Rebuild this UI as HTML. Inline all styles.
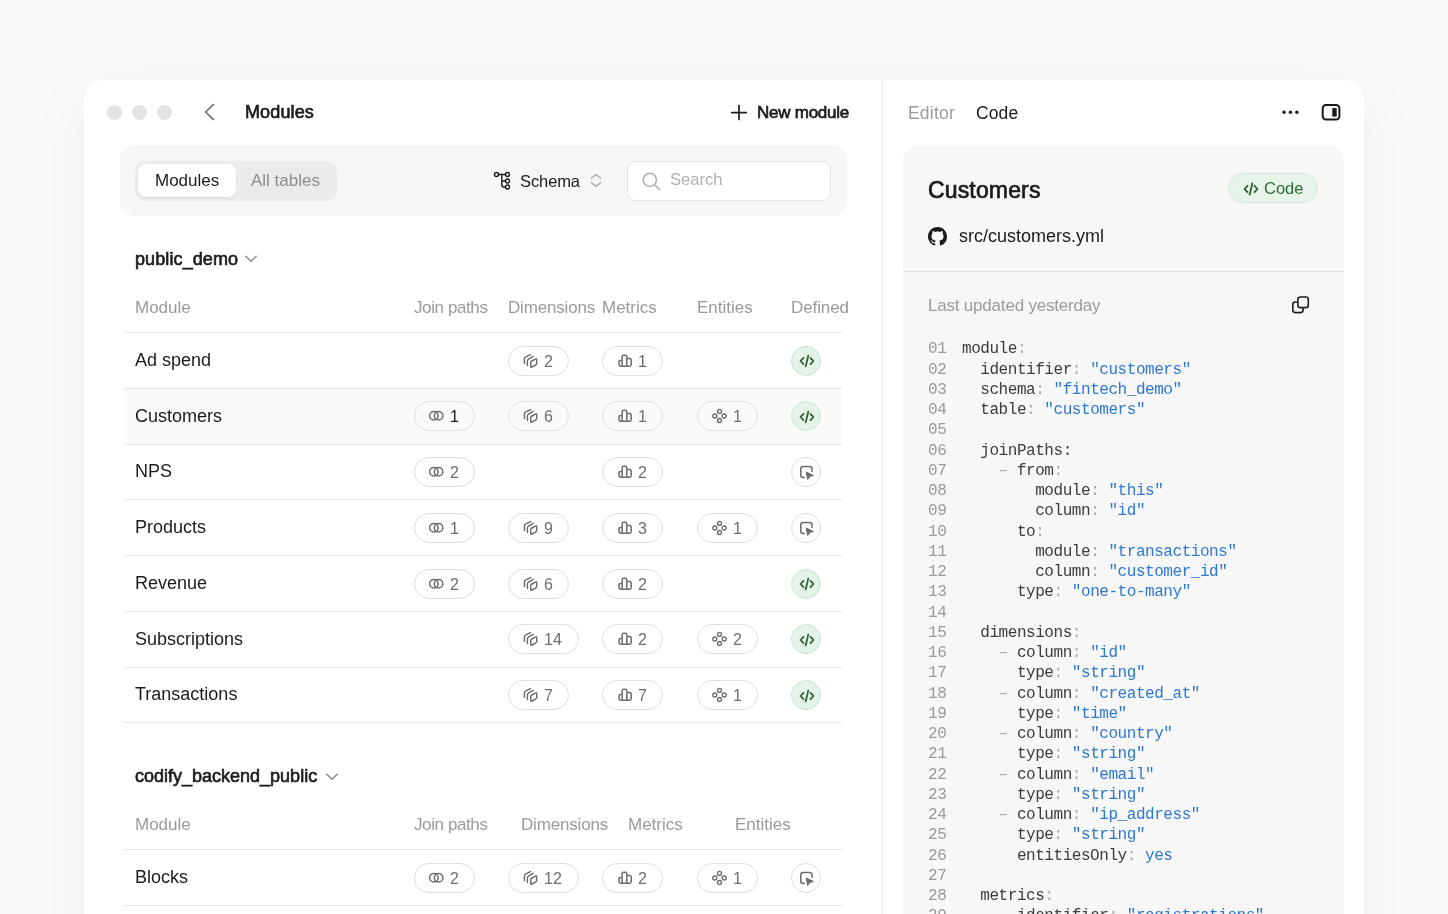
<!DOCTYPE html>
<html><head><meta charset="utf-8">
<style>
*{margin:0;padding:0;box-sizing:border-box}
html,body{width:1448px;height:914px;overflow:hidden}
body{background:#fafafa;font-family:"Liberation Sans",sans-serif;color:#1b1b1b;position:relative}
.a{position:absolute;overflow:visible}
.win{position:absolute;left:84px;top:80px;width:1280px;height:900px;background:#fff;border-radius:20px;box-shadow:0 8px 70px rgba(0,0,0,0.045),0 0 2px rgba(0,0,0,0.025)}
.vdiv{position:absolute;left:882px;top:80px;width:1px;height:834px;background:#ebebeb}
.tl{position:absolute;width:15px;height:15px;border-radius:50%;background:#e3e3e3}
.t{position:absolute;white-space:nowrap;line-height:1;will-change:transform}
.toolbar{position:absolute;left:120px;top:145px;width:727px;height:71px;background:#f6f6f6;border-radius:14px}
.seg{position:absolute;left:135px;top:161px;width:202px;height:40px;background:#ebebeb;border-radius:10px}
.segon{position:absolute;left:138px;top:164px;width:98px;height:33px;background:#fff;border-radius:8px;box-shadow:0 1px 2px rgba(0,0,0,0.08)}
.search{position:absolute;left:627px;top:160.5px;width:204px;height:40px;background:#fff;border:1px solid #e4e4e4;border-radius:8px}
.hline{position:absolute;left:124px;width:718px;height:1px;background:#e6e6e6}
.rowbg{position:absolute;left:124px;width:718px;background:#fafafa}
.pill{position:absolute;height:30px;border:1px solid #dedede;border-radius:15px}
.dcirc{position:absolute;width:30px;height:30px;border-radius:50%;border:1px solid #dedede}
.dcirc.g{background:#e4f2e7;border-color:#cce4d1}
.card{position:absolute;left:902.5px;top:145px;width:441.5px;height:800px;background:#f7f7f7;border-radius:16px}
.badge{position:absolute;left:1228px;top:173px;width:90px;height:30px;border-radius:15px;background:#e6f4e9;border:1px solid #d3e8d8}
.cdiv{position:absolute;left:902.5px;top:271px;width:441.5px;height:1px;background:#e2e2e2}
.code{font-family:"Liberation Mono",monospace}
</style></head><body>
<div class="win"></div>
<div class="vdiv"></div>
<div class="tl" style="left:107.0px;top:105.0px"></div>
<div class="tl" style="left:132.1px;top:105.0px"></div>
<div class="tl" style="left:157.3px;top:105.0px"></div>
<svg class="a" style="left:200px;top:100px" width="20" height="24" viewBox="0 0 20 24"><polyline points="13.3,4.6 5.6,12 13.3,19.4" fill="none" stroke="#6f6f6f" stroke-width="1.6" stroke-linecap="round" stroke-linejoin="round"/></svg>
<div class="t" style="left:245.00px;top:103.26px;font-size:18px;color:#1b1b1b;font-weight:400;letter-spacing:0.13px;-webkit-text-stroke:0.65px #1b1b1b;">Modules</div>
<svg class="a" style="left:729px;top:103px" width="20" height="20" viewBox="0 0 20 20"><path d="M10 2.5V16.5M2.8 9.6H17.2" stroke="#1b1b1b" stroke-width="1.7" stroke-linecap="round"/></svg>
<div class="t" style="left:757.00px;top:104.11px;font-size:17px;color:#1b1b1b;font-weight:400;letter-spacing:-0.25px;-webkit-text-stroke:0.65px #1b1b1b;">New module</div>
<div class="toolbar"></div><div class="seg"></div><div class="segon"></div>
<div class="t" style="left:155.00px;top:172.11px;font-size:17px;color:#1b1b1b;font-weight:400;">Modules</div>
<div class="t" style="left:250.50px;top:172.11px;font-size:17px;color:#8d8d8d;font-weight:400;">All tables</div>
<svg class="a" style="left:492px;top:170px" width="22" height="22" viewBox="0 0 22 22" fill="none" stroke="#1b1b1b" stroke-width="1.4"><circle cx="4.5" cy="4.5" r="2"/><circle cx="15.5" cy="4.5" r="2"/><circle cx="15.5" cy="11" r="2"/><circle cx="15.5" cy="17" r="2"/><path d="M6.5 4.5H13.5M9.8 4.5V15Q9.8 17 11.8 17H13.5M9.8 11H13.5"/></svg>
<div class="t" style="left:520.00px;top:172.53px;font-size:16.5px;color:#1b1b1b;font-weight:400;letter-spacing:-0.1px;">Schema</div>
<svg class="a" style="left:588px;top:172px" width="16" height="18" viewBox="0 0 16 18" fill="none" stroke="#b0b0b0" stroke-width="1.4" stroke-linecap="round" stroke-linejoin="round"><polyline points="3.2,6.3 7.9,2.6 12.6,6.3"/><polyline points="3.2,10.6 7.9,14.4 12.6,10.6"/></svg>
<div class="search"></div>
<svg class="a" style="left:640px;top:171px" width="22" height="22" viewBox="0 0 22 22" fill="none" stroke="#b0b0b0" stroke-width="1.5" stroke-linecap="round"><circle cx="9.8" cy="8.8" r="6.6"/><path d="M14.6 13.7L19.6 18.6"/></svg>
<div class="t" style="left:670.00px;top:172.45px;font-size:16.6px;color:#b0b0b0;font-weight:400;">Search</div>
<div class="t" style="left:134.50px;top:249.66px;font-size:18px;color:#1b1b1b;font-weight:400;letter-spacing:0.1px;-webkit-text-stroke:0.65px #1b1b1b;">public_demo</div>
<svg class="a" style="left:243px;top:252px" width="16" height="14" viewBox="0 0 16 14" fill="none" stroke="#8a8a8a" stroke-width="1.4" stroke-linecap="round" stroke-linejoin="round"><polyline points="2.8,4.2 8,9.3 13.2,4.2"/></svg>
<div class="t" style="left:135.00px;top:299.11px;font-size:17px;color:#9a9a9a;font-weight:400;letter-spacing:0px;">Module</div>
<div class="t" style="left:413.50px;top:299.11px;font-size:17px;color:#9a9a9a;font-weight:400;letter-spacing:-0.4px;">Join paths</div>
<div class="t" style="left:508.00px;top:299.11px;font-size:17px;color:#9a9a9a;font-weight:400;letter-spacing:-0.17px;">Dimensions</div>
<div class="t" style="left:602.00px;top:299.11px;font-size:17px;color:#9a9a9a;font-weight:400;letter-spacing:0px;">Metrics</div>
<div class="t" style="left:697.00px;top:299.11px;font-size:17px;color:#9a9a9a;font-weight:400;letter-spacing:0px;">Entities</div>
<div class="t" style="left:791.00px;top:299.11px;font-size:17px;color:#9a9a9a;font-weight:400;letter-spacing:-0.1px;">Defined</div>
<div class="hline" style="top:332px"></div>
<div class="hline" style="top:387.75px"></div>
<div class="t" style="left:135.00px;top:350.79px;font-size:18px;color:#1b1b1b;font-weight:400;">Ad spend</div>
<div class="pill" style="left:508px;top:345.62px;width:61px"></div><svg class="a" style="left:508px;top:345.62px" width="61" height="30" viewBox="0 0 61 30"><g fill="none" stroke="#6c6c6c" stroke-width="1.45" stroke-linejoin="round" stroke-linecap="round"><path d="M22.7 16.9Q22.7 15.6 23.9 15L27.5 13.1Q28.7 12.5 28.7 13.8V17.3Q28.7 18.6 27.5 19.2L23.9 21Q22.7 21.6 22.7 20.3Z"/><path d="M19.4 19.5V15Q19.4 13.8 20.5 13.2L25.1 10.3"/><path d="M16.4 17.6V13Q16.4 11.8 17.5 11.2L22.4 8.6"/></g></svg><div class="t" style="left:543.80px;top:353.68px;font-size:16px;color:#6e6e6e;font-weight:400;">2</div>
<div class="pill" style="left:602px;top:345.62px;width:61px"></div><svg class="a" style="left:602px;top:345.62px" width="61" height="30" viewBox="0 0 61 30"><path fill="none" stroke="#6c6c6c" stroke-width="1.5" stroke-linejoin="round" d="M17 18.6V16.1Q17 14.6 18.5 14.6H20.1V10.8Q20.1 9.3 21.6 9.3H23.3Q24.8 9.3 24.8 10.8V12.6H27.7Q29.2 12.6 29.2 14.1V18.6Q29.2 20.3 27.5 20.3H18.7Q17 20.3 17 18.6ZM20.1 14.6V20.3M24.8 12.6V20.3"/></svg><div class="t" style="left:637.80px;top:353.68px;font-size:16px;color:#6e6e6e;font-weight:400;">1</div>
<div class="dcirc g" style="left:791px;top:345.62px"></div><svg class="a" style="left:799px;top:354.12px" width="16" height="14" viewBox="0 0 16 14" fill="none" stroke="#2c6233" stroke-width="1.7" stroke-linecap="round" stroke-linejoin="round"><polyline points="4.5,3.8 1.5,7 4.5,10.2"/><polyline points="11.5,3.8 14.5,7 11.5,10.2"/><path d="M9.3 1.5L6.7 12.5"/></svg>
<div class="rowbg" style="top:388.75px;height:54.75px"></div><div class="hline" style="top:443.50px"></div>
<div class="t" style="left:135.00px;top:406.54px;font-size:18px;color:#1b1b1b;font-weight:400;">Customers</div>
<div class="pill" style="left:414px;top:401.38px;width:61px"></div><svg class="a" style="left:414px;top:401.38px" width="61" height="30" viewBox="0 0 61 30"><g fill="none" stroke="#6c6c6c" stroke-width="1.5"><circle cx="19.9" cy="14.75" r="4.3"/><circle cx="24.6" cy="14.75" r="4.3"/></g></svg><div class="t" style="left:449.80px;top:409.43px;font-size:16px;color:#1b1b1b;font-weight:400;">1</div>
<div class="pill" style="left:508px;top:401.38px;width:61px"></div><svg class="a" style="left:508px;top:401.38px" width="61" height="30" viewBox="0 0 61 30"><g fill="none" stroke="#6c6c6c" stroke-width="1.45" stroke-linejoin="round" stroke-linecap="round"><path d="M22.7 16.9Q22.7 15.6 23.9 15L27.5 13.1Q28.7 12.5 28.7 13.8V17.3Q28.7 18.6 27.5 19.2L23.9 21Q22.7 21.6 22.7 20.3Z"/><path d="M19.4 19.5V15Q19.4 13.8 20.5 13.2L25.1 10.3"/><path d="M16.4 17.6V13Q16.4 11.8 17.5 11.2L22.4 8.6"/></g></svg><div class="t" style="left:543.80px;top:409.43px;font-size:16px;color:#6e6e6e;font-weight:400;">6</div>
<div class="pill" style="left:602px;top:401.38px;width:61px"></div><svg class="a" style="left:602px;top:401.38px" width="61" height="30" viewBox="0 0 61 30"><path fill="none" stroke="#6c6c6c" stroke-width="1.5" stroke-linejoin="round" d="M17 18.6V16.1Q17 14.6 18.5 14.6H20.1V10.8Q20.1 9.3 21.6 9.3H23.3Q24.8 9.3 24.8 10.8V12.6H27.7Q29.2 12.6 29.2 14.1V18.6Q29.2 20.3 27.5 20.3H18.7Q17 20.3 17 18.6ZM20.1 14.6V20.3M24.8 12.6V20.3"/></svg><div class="t" style="left:637.80px;top:409.43px;font-size:16px;color:#6e6e6e;font-weight:400;">1</div>
<div class="pill" style="left:697px;top:401.38px;width:61px"></div><svg class="a" style="left:697px;top:401.38px" width="61" height="30" viewBox="0 0 61 30"><g fill="none" stroke="#6c6c6c" stroke-width="1.35"><circle cx="22.5" cy="10.4" r="2.0"/><circle cx="17.8" cy="14.95" r="2.0"/><circle cx="27.2" cy="14.95" r="2.0"/><circle cx="22.5" cy="19.5" r="2.0"/></g></svg><div class="t" style="left:732.80px;top:409.43px;font-size:16px;color:#6e6e6e;font-weight:400;">1</div>
<div class="dcirc g" style="left:791px;top:401.38px"></div><svg class="a" style="left:799px;top:409.88px" width="16" height="14" viewBox="0 0 16 14" fill="none" stroke="#2c6233" stroke-width="1.7" stroke-linecap="round" stroke-linejoin="round"><polyline points="4.5,3.8 1.5,7 4.5,10.2"/><polyline points="11.5,3.8 14.5,7 11.5,10.2"/><path d="M9.3 1.5L6.7 12.5"/></svg>
<div class="hline" style="top:499.25px"></div>
<div class="t" style="left:135.00px;top:462.29px;font-size:18px;color:#1b1b1b;font-weight:400;">NPS</div>
<div class="pill" style="left:414px;top:457.12px;width:61px"></div><svg class="a" style="left:414px;top:457.12px" width="61" height="30" viewBox="0 0 61 30"><g fill="none" stroke="#6c6c6c" stroke-width="1.5"><circle cx="19.9" cy="14.75" r="4.3"/><circle cx="24.6" cy="14.75" r="4.3"/></g></svg><div class="t" style="left:449.80px;top:465.18px;font-size:16px;color:#6e6e6e;font-weight:400;">2</div>
<div class="pill" style="left:602px;top:457.12px;width:61px"></div><svg class="a" style="left:602px;top:457.12px" width="61" height="30" viewBox="0 0 61 30"><path fill="none" stroke="#6c6c6c" stroke-width="1.5" stroke-linejoin="round" d="M17 18.6V16.1Q17 14.6 18.5 14.6H20.1V10.8Q20.1 9.3 21.6 9.3H23.3Q24.8 9.3 24.8 10.8V12.6H27.7Q29.2 12.6 29.2 14.1V18.6Q29.2 20.3 27.5 20.3H18.7Q17 20.3 17 18.6ZM20.1 14.6V20.3M24.8 12.6V20.3"/></svg><div class="t" style="left:637.80px;top:465.18px;font-size:16px;color:#6e6e6e;font-weight:400;">2</div>
<div class="dcirc" style="left:791px;top:457.12px"></div><svg class="a" style="left:791px;top:457.12px" width="30" height="30" viewBox="0 0 30 30" fill="none"><path d="M21.05 14.6V12Q21.05 9.5 18.55 9.5H12.25Q9.75 9.5 9.75 12V18.1Q9.75 20.6 12.25 20.6H13.4" stroke="#6c6c6c" stroke-width="1.5" stroke-linecap="round"/><path d="M15.2 14.9L22.4 18.5L18.8 19.5L16.7 22.5Z" fill="#6c6c6c" stroke="#6c6c6c" stroke-width="1" stroke-linejoin="round"/></svg>
<div class="hline" style="top:555.00px"></div>
<div class="t" style="left:135.00px;top:518.04px;font-size:18px;color:#1b1b1b;font-weight:400;">Products</div>
<div class="pill" style="left:414px;top:512.88px;width:61px"></div><svg class="a" style="left:414px;top:512.88px" width="61" height="30" viewBox="0 0 61 30"><g fill="none" stroke="#6c6c6c" stroke-width="1.5"><circle cx="19.9" cy="14.75" r="4.3"/><circle cx="24.6" cy="14.75" r="4.3"/></g></svg><div class="t" style="left:449.80px;top:520.93px;font-size:16px;color:#6e6e6e;font-weight:400;">1</div>
<div class="pill" style="left:508px;top:512.88px;width:61px"></div><svg class="a" style="left:508px;top:512.88px" width="61" height="30" viewBox="0 0 61 30"><g fill="none" stroke="#6c6c6c" stroke-width="1.45" stroke-linejoin="round" stroke-linecap="round"><path d="M22.7 16.9Q22.7 15.6 23.9 15L27.5 13.1Q28.7 12.5 28.7 13.8V17.3Q28.7 18.6 27.5 19.2L23.9 21Q22.7 21.6 22.7 20.3Z"/><path d="M19.4 19.5V15Q19.4 13.8 20.5 13.2L25.1 10.3"/><path d="M16.4 17.6V13Q16.4 11.8 17.5 11.2L22.4 8.6"/></g></svg><div class="t" style="left:543.80px;top:520.93px;font-size:16px;color:#6e6e6e;font-weight:400;">9</div>
<div class="pill" style="left:602px;top:512.88px;width:61px"></div><svg class="a" style="left:602px;top:512.88px" width="61" height="30" viewBox="0 0 61 30"><path fill="none" stroke="#6c6c6c" stroke-width="1.5" stroke-linejoin="round" d="M17 18.6V16.1Q17 14.6 18.5 14.6H20.1V10.8Q20.1 9.3 21.6 9.3H23.3Q24.8 9.3 24.8 10.8V12.6H27.7Q29.2 12.6 29.2 14.1V18.6Q29.2 20.3 27.5 20.3H18.7Q17 20.3 17 18.6ZM20.1 14.6V20.3M24.8 12.6V20.3"/></svg><div class="t" style="left:637.80px;top:520.93px;font-size:16px;color:#6e6e6e;font-weight:400;">3</div>
<div class="pill" style="left:697px;top:512.88px;width:61px"></div><svg class="a" style="left:697px;top:512.88px" width="61" height="30" viewBox="0 0 61 30"><g fill="none" stroke="#6c6c6c" stroke-width="1.35"><circle cx="22.5" cy="10.4" r="2.0"/><circle cx="17.8" cy="14.95" r="2.0"/><circle cx="27.2" cy="14.95" r="2.0"/><circle cx="22.5" cy="19.5" r="2.0"/></g></svg><div class="t" style="left:732.80px;top:520.93px;font-size:16px;color:#6e6e6e;font-weight:400;">1</div>
<div class="dcirc" style="left:791px;top:512.88px"></div><svg class="a" style="left:791px;top:512.88px" width="30" height="30" viewBox="0 0 30 30" fill="none"><path d="M21.05 14.6V12Q21.05 9.5 18.55 9.5H12.25Q9.75 9.5 9.75 12V18.1Q9.75 20.6 12.25 20.6H13.4" stroke="#6c6c6c" stroke-width="1.5" stroke-linecap="round"/><path d="M15.2 14.9L22.4 18.5L18.8 19.5L16.7 22.5Z" fill="#6c6c6c" stroke="#6c6c6c" stroke-width="1" stroke-linejoin="round"/></svg>
<div class="hline" style="top:610.75px"></div>
<div class="t" style="left:135.00px;top:573.79px;font-size:18px;color:#1b1b1b;font-weight:400;">Revenue</div>
<div class="pill" style="left:414px;top:568.62px;width:61px"></div><svg class="a" style="left:414px;top:568.62px" width="61" height="30" viewBox="0 0 61 30"><g fill="none" stroke="#6c6c6c" stroke-width="1.5"><circle cx="19.9" cy="14.75" r="4.3"/><circle cx="24.6" cy="14.75" r="4.3"/></g></svg><div class="t" style="left:449.80px;top:576.68px;font-size:16px;color:#6e6e6e;font-weight:400;">2</div>
<div class="pill" style="left:508px;top:568.62px;width:61px"></div><svg class="a" style="left:508px;top:568.62px" width="61" height="30" viewBox="0 0 61 30"><g fill="none" stroke="#6c6c6c" stroke-width="1.45" stroke-linejoin="round" stroke-linecap="round"><path d="M22.7 16.9Q22.7 15.6 23.9 15L27.5 13.1Q28.7 12.5 28.7 13.8V17.3Q28.7 18.6 27.5 19.2L23.9 21Q22.7 21.6 22.7 20.3Z"/><path d="M19.4 19.5V15Q19.4 13.8 20.5 13.2L25.1 10.3"/><path d="M16.4 17.6V13Q16.4 11.8 17.5 11.2L22.4 8.6"/></g></svg><div class="t" style="left:543.80px;top:576.68px;font-size:16px;color:#6e6e6e;font-weight:400;">6</div>
<div class="pill" style="left:602px;top:568.62px;width:61px"></div><svg class="a" style="left:602px;top:568.62px" width="61" height="30" viewBox="0 0 61 30"><path fill="none" stroke="#6c6c6c" stroke-width="1.5" stroke-linejoin="round" d="M17 18.6V16.1Q17 14.6 18.5 14.6H20.1V10.8Q20.1 9.3 21.6 9.3H23.3Q24.8 9.3 24.8 10.8V12.6H27.7Q29.2 12.6 29.2 14.1V18.6Q29.2 20.3 27.5 20.3H18.7Q17 20.3 17 18.6ZM20.1 14.6V20.3M24.8 12.6V20.3"/></svg><div class="t" style="left:637.80px;top:576.68px;font-size:16px;color:#6e6e6e;font-weight:400;">2</div>
<div class="dcirc g" style="left:791px;top:568.62px"></div><svg class="a" style="left:799px;top:577.12px" width="16" height="14" viewBox="0 0 16 14" fill="none" stroke="#2c6233" stroke-width="1.7" stroke-linecap="round" stroke-linejoin="round"><polyline points="4.5,3.8 1.5,7 4.5,10.2"/><polyline points="11.5,3.8 14.5,7 11.5,10.2"/><path d="M9.3 1.5L6.7 12.5"/></svg>
<div class="hline" style="top:666.50px"></div>
<div class="t" style="left:135.00px;top:629.54px;font-size:18px;color:#1b1b1b;font-weight:400;">Subscriptions</div>
<div class="pill" style="left:508px;top:624.38px;width:71px"></div><svg class="a" style="left:508px;top:624.38px" width="71" height="30" viewBox="0 0 71 30"><g fill="none" stroke="#6c6c6c" stroke-width="1.45" stroke-linejoin="round" stroke-linecap="round"><path d="M22.7 16.9Q22.7 15.6 23.9 15L27.5 13.1Q28.7 12.5 28.7 13.8V17.3Q28.7 18.6 27.5 19.2L23.9 21Q22.7 21.6 22.7 20.3Z"/><path d="M19.4 19.5V15Q19.4 13.8 20.5 13.2L25.1 10.3"/><path d="M16.4 17.6V13Q16.4 11.8 17.5 11.2L22.4 8.6"/></g></svg><div class="t" style="left:543.80px;top:632.43px;font-size:16px;color:#6e6e6e;font-weight:400;">14</div>
<div class="pill" style="left:602px;top:624.38px;width:61px"></div><svg class="a" style="left:602px;top:624.38px" width="61" height="30" viewBox="0 0 61 30"><path fill="none" stroke="#6c6c6c" stroke-width="1.5" stroke-linejoin="round" d="M17 18.6V16.1Q17 14.6 18.5 14.6H20.1V10.8Q20.1 9.3 21.6 9.3H23.3Q24.8 9.3 24.8 10.8V12.6H27.7Q29.2 12.6 29.2 14.1V18.6Q29.2 20.3 27.5 20.3H18.7Q17 20.3 17 18.6ZM20.1 14.6V20.3M24.8 12.6V20.3"/></svg><div class="t" style="left:637.80px;top:632.43px;font-size:16px;color:#6e6e6e;font-weight:400;">2</div>
<div class="pill" style="left:697px;top:624.38px;width:61px"></div><svg class="a" style="left:697px;top:624.38px" width="61" height="30" viewBox="0 0 61 30"><g fill="none" stroke="#6c6c6c" stroke-width="1.35"><circle cx="22.5" cy="10.4" r="2.0"/><circle cx="17.8" cy="14.95" r="2.0"/><circle cx="27.2" cy="14.95" r="2.0"/><circle cx="22.5" cy="19.5" r="2.0"/></g></svg><div class="t" style="left:732.80px;top:632.43px;font-size:16px;color:#6e6e6e;font-weight:400;">2</div>
<div class="dcirc g" style="left:791px;top:624.38px"></div><svg class="a" style="left:799px;top:632.88px" width="16" height="14" viewBox="0 0 16 14" fill="none" stroke="#2c6233" stroke-width="1.7" stroke-linecap="round" stroke-linejoin="round"><polyline points="4.5,3.8 1.5,7 4.5,10.2"/><polyline points="11.5,3.8 14.5,7 11.5,10.2"/><path d="M9.3 1.5L6.7 12.5"/></svg>
<div class="hline" style="top:722.25px"></div>
<div class="t" style="left:135.00px;top:685.29px;font-size:18px;color:#1b1b1b;font-weight:400;">Transactions</div>
<div class="pill" style="left:508px;top:680.12px;width:61px"></div><svg class="a" style="left:508px;top:680.12px" width="61" height="30" viewBox="0 0 61 30"><g fill="none" stroke="#6c6c6c" stroke-width="1.45" stroke-linejoin="round" stroke-linecap="round"><path d="M22.7 16.9Q22.7 15.6 23.9 15L27.5 13.1Q28.7 12.5 28.7 13.8V17.3Q28.7 18.6 27.5 19.2L23.9 21Q22.7 21.6 22.7 20.3Z"/><path d="M19.4 19.5V15Q19.4 13.8 20.5 13.2L25.1 10.3"/><path d="M16.4 17.6V13Q16.4 11.8 17.5 11.2L22.4 8.6"/></g></svg><div class="t" style="left:543.80px;top:688.18px;font-size:16px;color:#6e6e6e;font-weight:400;">7</div>
<div class="pill" style="left:602px;top:680.12px;width:61px"></div><svg class="a" style="left:602px;top:680.12px" width="61" height="30" viewBox="0 0 61 30"><path fill="none" stroke="#6c6c6c" stroke-width="1.5" stroke-linejoin="round" d="M17 18.6V16.1Q17 14.6 18.5 14.6H20.1V10.8Q20.1 9.3 21.6 9.3H23.3Q24.8 9.3 24.8 10.8V12.6H27.7Q29.2 12.6 29.2 14.1V18.6Q29.2 20.3 27.5 20.3H18.7Q17 20.3 17 18.6ZM20.1 14.6V20.3M24.8 12.6V20.3"/></svg><div class="t" style="left:637.80px;top:688.18px;font-size:16px;color:#6e6e6e;font-weight:400;">7</div>
<div class="pill" style="left:697px;top:680.12px;width:61px"></div><svg class="a" style="left:697px;top:680.12px" width="61" height="30" viewBox="0 0 61 30"><g fill="none" stroke="#6c6c6c" stroke-width="1.35"><circle cx="22.5" cy="10.4" r="2.0"/><circle cx="17.8" cy="14.95" r="2.0"/><circle cx="27.2" cy="14.95" r="2.0"/><circle cx="22.5" cy="19.5" r="2.0"/></g></svg><div class="t" style="left:732.80px;top:688.18px;font-size:16px;color:#6e6e6e;font-weight:400;">1</div>
<div class="dcirc g" style="left:791px;top:680.12px"></div><svg class="a" style="left:799px;top:688.62px" width="16" height="14" viewBox="0 0 16 14" fill="none" stroke="#2c6233" stroke-width="1.7" stroke-linecap="round" stroke-linejoin="round"><polyline points="4.5,3.8 1.5,7 4.5,10.2"/><polyline points="11.5,3.8 14.5,7 11.5,10.2"/><path d="M9.3 1.5L6.7 12.5"/></svg>
<div class="t" style="left:134.50px;top:766.76px;font-size:18px;color:#1b1b1b;font-weight:400;letter-spacing:0px;-webkit-text-stroke:0.65px #1b1b1b;">codify_backend_public</div>
<svg class="a" style="left:324px;top:770px" width="16" height="14" viewBox="0 0 16 14" fill="none" stroke="#8a8a8a" stroke-width="1.4" stroke-linecap="round" stroke-linejoin="round"><polyline points="2.8,4.2 8,9.3 13.2,4.2"/></svg>
<div class="t" style="left:135.00px;top:816.11px;font-size:17px;color:#9a9a9a;font-weight:400;letter-spacing:0px;">Module</div>
<div class="t" style="left:413.50px;top:816.11px;font-size:17px;color:#9a9a9a;font-weight:400;letter-spacing:-0.4px;">Join paths</div>
<div class="t" style="left:521.00px;top:816.11px;font-size:17px;color:#9a9a9a;font-weight:400;letter-spacing:-0.17px;">Dimensions</div>
<div class="t" style="left:628.00px;top:816.11px;font-size:17px;color:#9a9a9a;font-weight:400;letter-spacing:0px;">Metrics</div>
<div class="t" style="left:735.00px;top:816.11px;font-size:17px;color:#9a9a9a;font-weight:400;letter-spacing:0px;">Entities</div>
<div class="hline" style="top:849px"></div>
<div class="hline" style="top:905.00px"></div>
<div class="t" style="left:135.00px;top:867.91px;font-size:18px;color:#1b1b1b;font-weight:400;">Blocks</div>
<div class="pill" style="left:414px;top:862.75px;width:61px"></div><svg class="a" style="left:414px;top:862.75px" width="61" height="30" viewBox="0 0 61 30"><g fill="none" stroke="#6c6c6c" stroke-width="1.5"><circle cx="19.9" cy="14.75" r="4.3"/><circle cx="24.6" cy="14.75" r="4.3"/></g></svg><div class="t" style="left:449.80px;top:870.81px;font-size:16px;color:#6e6e6e;font-weight:400;">2</div>
<div class="pill" style="left:508px;top:862.75px;width:71px"></div><svg class="a" style="left:508px;top:862.75px" width="71" height="30" viewBox="0 0 71 30"><g fill="none" stroke="#6c6c6c" stroke-width="1.45" stroke-linejoin="round" stroke-linecap="round"><path d="M22.7 16.9Q22.7 15.6 23.9 15L27.5 13.1Q28.7 12.5 28.7 13.8V17.3Q28.7 18.6 27.5 19.2L23.9 21Q22.7 21.6 22.7 20.3Z"/><path d="M19.4 19.5V15Q19.4 13.8 20.5 13.2L25.1 10.3"/><path d="M16.4 17.6V13Q16.4 11.8 17.5 11.2L22.4 8.6"/></g></svg><div class="t" style="left:543.80px;top:870.81px;font-size:16px;color:#6e6e6e;font-weight:400;">12</div>
<div class="pill" style="left:602px;top:862.75px;width:61px"></div><svg class="a" style="left:602px;top:862.75px" width="61" height="30" viewBox="0 0 61 30"><path fill="none" stroke="#6c6c6c" stroke-width="1.5" stroke-linejoin="round" d="M17 18.6V16.1Q17 14.6 18.5 14.6H20.1V10.8Q20.1 9.3 21.6 9.3H23.3Q24.8 9.3 24.8 10.8V12.6H27.7Q29.2 12.6 29.2 14.1V18.6Q29.2 20.3 27.5 20.3H18.7Q17 20.3 17 18.6ZM20.1 14.6V20.3M24.8 12.6V20.3"/></svg><div class="t" style="left:637.80px;top:870.81px;font-size:16px;color:#6e6e6e;font-weight:400;">2</div>
<div class="pill" style="left:697px;top:862.75px;width:61px"></div><svg class="a" style="left:697px;top:862.75px" width="61" height="30" viewBox="0 0 61 30"><g fill="none" stroke="#6c6c6c" stroke-width="1.35"><circle cx="22.5" cy="10.4" r="2.0"/><circle cx="17.8" cy="14.95" r="2.0"/><circle cx="27.2" cy="14.95" r="2.0"/><circle cx="22.5" cy="19.5" r="2.0"/></g></svg><div class="t" style="left:732.80px;top:870.81px;font-size:16px;color:#6e6e6e;font-weight:400;">1</div>
<div class="dcirc" style="left:791px;top:862.75px"></div><svg class="a" style="left:791px;top:862.75px" width="30" height="30" viewBox="0 0 30 30" fill="none"><path d="M21.05 14.6V12Q21.05 9.5 18.55 9.5H12.25Q9.75 9.5 9.75 12V18.1Q9.75 20.6 12.25 20.6H13.4" stroke="#6c6c6c" stroke-width="1.5" stroke-linecap="round"/><path d="M15.2 14.9L22.4 18.5L18.8 19.5L16.7 22.5Z" fill="#6c6c6c" stroke="#6c6c6c" stroke-width="1" stroke-linejoin="round"/></svg>
<div class="t" style="left:908.00px;top:104.79px;font-size:17.5px;color:#9b9b9b;font-weight:400;letter-spacing:0.2px;">Editor</div>
<div class="t" style="left:976.00px;top:104.79px;font-size:17.5px;color:#1b1b1b;font-weight:400;letter-spacing:0.1px;">Code</div>
<svg class="a" style="left:1280px;top:108px" width="20" height="8" viewBox="0 0 20 8" fill="#1b1b1b"><circle cx="4.1" cy="4.2" r="1.7"/><circle cx="10.4" cy="4.2" r="1.7"/><circle cx="16.9" cy="4.2" r="1.7"/></svg>
<svg class="a" style="left:1320px;top:102px" width="22" height="20" viewBox="0 0 22 20" fill="none"><rect x="2.7" y="3.1" width="16.7" height="14.3" rx="3.2" stroke="#1b1b1b" stroke-width="2"/><rect x="12.3" y="6.1" width="4.4" height="8.5" fill="#1b1b1b"/></svg>
<div class="card"></div>
<div class="t" style="left:928.00px;top:178.53px;font-size:23px;color:#1b1b1b;font-weight:400;letter-spacing:0.15px;-webkit-text-stroke:0.7px #1b1b1b;">Customers</div>
<div class="badge"></div><svg class="a" style="left:1243px;top:181.5px" width="16" height="14" viewBox="0 0 16 14" fill="none" stroke="#2c6233" stroke-width="1.8" stroke-linecap="round" stroke-linejoin="round"><polyline points="4.5,3.8 1.5,7 4.5,10.2"/><polyline points="11.5,3.8 14.5,7 11.5,10.2"/><path d="M9.3 1.5L6.7 12.5"/></svg><div class="t" style="left:1263.80px;top:179.83px;font-size:16.5px;color:#2f6b38;font-weight:400;">Code</div>
<svg class="a" style="left:928px;top:227px" width="19" height="19" viewBox="0 0 16 16"><path fill="#1b1b1b" d="M8 0C3.58 0 0 3.58 0 8c0 3.54 2.29 6.53 5.47 7.59.4.07.55-.17.55-.38 0-.19-.01-.82-.01-1.49-2.01.37-2.53-.49-2.69-.94-.09-.23-.48-.94-.82-1.13-.28-.15-.68-.52-.01-.53.63-.01 1.08.58 1.23.82.72 1.21 1.87.87 2.33.66.07-.52.28-.87.51-1.07-1.78-.2-3.64-.89-3.64-3.95 0-.87.31-1.59.82-2.15-.08-.2-.36-1.02.08-2.12 0 0 .67-.21 2.2.82.64-.18 1.32-.27 2-.27.68 0 1.36.09 2 .27 1.53-1.04 2.2-.82 2.2-.82.44 1.1.16 1.92.08 2.12.51.56.82 1.27.82 2.15 0 3.07-1.87 3.75-3.65 3.95.29.25.54.73.54 1.48 0 1.07-.01 1.93-.01 2.2 0 .21.15.46.55.38A8.013 8.013 0 0016 8c0-4.42-3.58-8-8-8z"/></svg>
<div class="t" style="left:958.50px;top:226.96px;font-size:18px;color:#1b1b1b;font-weight:400;letter-spacing:0px;">src/customers.yml</div>
<div class="cdiv"></div>
<div class="t" style="left:928.00px;top:297.11px;font-size:17px;color:#9a9a9a;font-weight:400;letter-spacing:-0.2px;">Last updated yesterday</div>
<svg class="a" style="left:1288px;top:293px" width="24" height="24" viewBox="0 0 24 24" fill="none" stroke="#1f1f1f" stroke-width="1.6" stroke-linejoin="round"><rect x="9.9" y="4" width="10.4" height="10.6" rx="2.4"/><path d="M9.9 9H7.3Q4.8 9 4.8 11.5V17.1Q4.8 19.6 7.3 19.6H12.6Q15.1 19.6 15.1 17.1V14.6"/></svg>
<div class="t code" style="left:928.00px;top:341.44px;font-size:16px;color:#9a9a9a;font-weight:400;letter-spacing:-0.45px;">01</div>
<div class="t code" style="left:962.00px;top:341.44px;font-size:16px;color:#1b1b1b;font-weight:400;letter-spacing:-0.45px;white-space:pre;"><span style="color:#3c3c3c">module</span><span style="color:#a8a8a8">:</span></div>
<div class="t code" style="left:928.00px;top:361.69px;font-size:16px;color:#9a9a9a;font-weight:400;letter-spacing:-0.45px;">02</div>
<div class="t code" style="left:962.00px;top:361.69px;font-size:16px;color:#1b1b1b;font-weight:400;letter-spacing:-0.45px;white-space:pre;"><span style="color:#3c3c3c">  identifier</span><span style="color:#a8a8a8">:</span><span style="color:#2f78d1"> "customers"</span></div>
<div class="t code" style="left:928.00px;top:381.94px;font-size:16px;color:#9a9a9a;font-weight:400;letter-spacing:-0.45px;">03</div>
<div class="t code" style="left:962.00px;top:381.94px;font-size:16px;color:#1b1b1b;font-weight:400;letter-spacing:-0.45px;white-space:pre;"><span style="color:#3c3c3c">  schema</span><span style="color:#a8a8a8">:</span><span style="color:#2f78d1"> "fintech_demo"</span></div>
<div class="t code" style="left:928.00px;top:402.19px;font-size:16px;color:#9a9a9a;font-weight:400;letter-spacing:-0.45px;">04</div>
<div class="t code" style="left:962.00px;top:402.19px;font-size:16px;color:#1b1b1b;font-weight:400;letter-spacing:-0.45px;white-space:pre;"><span style="color:#3c3c3c">  table</span><span style="color:#a8a8a8">:</span><span style="color:#2f78d1"> "customers"</span></div>
<div class="t code" style="left:928.00px;top:422.44px;font-size:16px;color:#9a9a9a;font-weight:400;letter-spacing:-0.45px;">05</div>
<div class="t code" style="left:962.00px;top:422.44px;font-size:16px;color:#1b1b1b;font-weight:400;letter-spacing:-0.45px;white-space:pre;"></div>
<div class="t code" style="left:928.00px;top:442.69px;font-size:16px;color:#9a9a9a;font-weight:400;letter-spacing:-0.45px;">06</div>
<div class="t code" style="left:962.00px;top:442.69px;font-size:16px;color:#1b1b1b;font-weight:400;letter-spacing:-0.45px;white-space:pre;"><span style="color:#3c3c3c">  joinPaths:</span></div>
<div class="t code" style="left:928.00px;top:462.94px;font-size:16px;color:#9a9a9a;font-weight:400;letter-spacing:-0.45px;">07</div>
<div class="t code" style="left:962.00px;top:462.94px;font-size:16px;color:#1b1b1b;font-weight:400;letter-spacing:-0.45px;white-space:pre;"><span style="color:#3c3c3c">    </span><span style="color:#a8a8a8">–</span><span style="color:#3c3c3c"> from</span><span style="color:#a8a8a8">:</span></div>
<div class="t code" style="left:928.00px;top:483.19px;font-size:16px;color:#9a9a9a;font-weight:400;letter-spacing:-0.45px;">08</div>
<div class="t code" style="left:962.00px;top:483.19px;font-size:16px;color:#1b1b1b;font-weight:400;letter-spacing:-0.45px;white-space:pre;"><span style="color:#3c3c3c">        module</span><span style="color:#a8a8a8">:</span><span style="color:#2f78d1"> "this"</span></div>
<div class="t code" style="left:928.00px;top:503.44px;font-size:16px;color:#9a9a9a;font-weight:400;letter-spacing:-0.45px;">09</div>
<div class="t code" style="left:962.00px;top:503.44px;font-size:16px;color:#1b1b1b;font-weight:400;letter-spacing:-0.45px;white-space:pre;"><span style="color:#3c3c3c">        column</span><span style="color:#a8a8a8">:</span><span style="color:#2f78d1"> "id"</span></div>
<div class="t code" style="left:928.00px;top:523.69px;font-size:16px;color:#9a9a9a;font-weight:400;letter-spacing:-0.45px;">10</div>
<div class="t code" style="left:962.00px;top:523.69px;font-size:16px;color:#1b1b1b;font-weight:400;letter-spacing:-0.45px;white-space:pre;"><span style="color:#3c3c3c">      to</span><span style="color:#a8a8a8">:</span></div>
<div class="t code" style="left:928.00px;top:543.94px;font-size:16px;color:#9a9a9a;font-weight:400;letter-spacing:-0.45px;">11</div>
<div class="t code" style="left:962.00px;top:543.94px;font-size:16px;color:#1b1b1b;font-weight:400;letter-spacing:-0.45px;white-space:pre;"><span style="color:#3c3c3c">        module</span><span style="color:#a8a8a8">:</span><span style="color:#2f78d1"> "transactions"</span></div>
<div class="t code" style="left:928.00px;top:564.19px;font-size:16px;color:#9a9a9a;font-weight:400;letter-spacing:-0.45px;">12</div>
<div class="t code" style="left:962.00px;top:564.19px;font-size:16px;color:#1b1b1b;font-weight:400;letter-spacing:-0.45px;white-space:pre;"><span style="color:#3c3c3c">        column</span><span style="color:#a8a8a8">:</span><span style="color:#2f78d1"> "customer_id"</span></div>
<div class="t code" style="left:928.00px;top:584.44px;font-size:16px;color:#9a9a9a;font-weight:400;letter-spacing:-0.45px;">13</div>
<div class="t code" style="left:962.00px;top:584.44px;font-size:16px;color:#1b1b1b;font-weight:400;letter-spacing:-0.45px;white-space:pre;"><span style="color:#3c3c3c">      type</span><span style="color:#a8a8a8">:</span><span style="color:#2f78d1"> "one-to-many"</span></div>
<div class="t code" style="left:928.00px;top:604.69px;font-size:16px;color:#9a9a9a;font-weight:400;letter-spacing:-0.45px;">14</div>
<div class="t code" style="left:962.00px;top:604.69px;font-size:16px;color:#1b1b1b;font-weight:400;letter-spacing:-0.45px;white-space:pre;"></div>
<div class="t code" style="left:928.00px;top:624.94px;font-size:16px;color:#9a9a9a;font-weight:400;letter-spacing:-0.45px;">15</div>
<div class="t code" style="left:962.00px;top:624.94px;font-size:16px;color:#1b1b1b;font-weight:400;letter-spacing:-0.45px;white-space:pre;"><span style="color:#3c3c3c">  dimensions</span><span style="color:#a8a8a8">:</span></div>
<div class="t code" style="left:928.00px;top:645.19px;font-size:16px;color:#9a9a9a;font-weight:400;letter-spacing:-0.45px;">16</div>
<div class="t code" style="left:962.00px;top:645.19px;font-size:16px;color:#1b1b1b;font-weight:400;letter-spacing:-0.45px;white-space:pre;"><span style="color:#3c3c3c">    </span><span style="color:#a8a8a8">–</span><span style="color:#3c3c3c"> column</span><span style="color:#a8a8a8">:</span><span style="color:#2f78d1"> "id"</span></div>
<div class="t code" style="left:928.00px;top:665.44px;font-size:16px;color:#9a9a9a;font-weight:400;letter-spacing:-0.45px;">17</div>
<div class="t code" style="left:962.00px;top:665.44px;font-size:16px;color:#1b1b1b;font-weight:400;letter-spacing:-0.45px;white-space:pre;"><span style="color:#3c3c3c">      type</span><span style="color:#a8a8a8">:</span><span style="color:#2f78d1"> "string"</span></div>
<div class="t code" style="left:928.00px;top:685.69px;font-size:16px;color:#9a9a9a;font-weight:400;letter-spacing:-0.45px;">18</div>
<div class="t code" style="left:962.00px;top:685.69px;font-size:16px;color:#1b1b1b;font-weight:400;letter-spacing:-0.45px;white-space:pre;"><span style="color:#3c3c3c">    </span><span style="color:#a8a8a8">–</span><span style="color:#3c3c3c"> column</span><span style="color:#a8a8a8">:</span><span style="color:#2f78d1"> "created_at"</span></div>
<div class="t code" style="left:928.00px;top:705.94px;font-size:16px;color:#9a9a9a;font-weight:400;letter-spacing:-0.45px;">19</div>
<div class="t code" style="left:962.00px;top:705.94px;font-size:16px;color:#1b1b1b;font-weight:400;letter-spacing:-0.45px;white-space:pre;"><span style="color:#3c3c3c">      type</span><span style="color:#a8a8a8">:</span><span style="color:#2f78d1"> "time"</span></div>
<div class="t code" style="left:928.00px;top:726.19px;font-size:16px;color:#9a9a9a;font-weight:400;letter-spacing:-0.45px;">20</div>
<div class="t code" style="left:962.00px;top:726.19px;font-size:16px;color:#1b1b1b;font-weight:400;letter-spacing:-0.45px;white-space:pre;"><span style="color:#3c3c3c">    </span><span style="color:#a8a8a8">–</span><span style="color:#3c3c3c"> column</span><span style="color:#a8a8a8">:</span><span style="color:#2f78d1"> "country"</span></div>
<div class="t code" style="left:928.00px;top:746.44px;font-size:16px;color:#9a9a9a;font-weight:400;letter-spacing:-0.45px;">21</div>
<div class="t code" style="left:962.00px;top:746.44px;font-size:16px;color:#1b1b1b;font-weight:400;letter-spacing:-0.45px;white-space:pre;"><span style="color:#3c3c3c">      type</span><span style="color:#a8a8a8">:</span><span style="color:#2f78d1"> "string"</span></div>
<div class="t code" style="left:928.00px;top:766.69px;font-size:16px;color:#9a9a9a;font-weight:400;letter-spacing:-0.45px;">22</div>
<div class="t code" style="left:962.00px;top:766.69px;font-size:16px;color:#1b1b1b;font-weight:400;letter-spacing:-0.45px;white-space:pre;"><span style="color:#3c3c3c">    </span><span style="color:#a8a8a8">–</span><span style="color:#3c3c3c"> column</span><span style="color:#a8a8a8">:</span><span style="color:#2f78d1"> "email"</span></div>
<div class="t code" style="left:928.00px;top:786.94px;font-size:16px;color:#9a9a9a;font-weight:400;letter-spacing:-0.45px;">23</div>
<div class="t code" style="left:962.00px;top:786.94px;font-size:16px;color:#1b1b1b;font-weight:400;letter-spacing:-0.45px;white-space:pre;"><span style="color:#3c3c3c">      type</span><span style="color:#a8a8a8">:</span><span style="color:#2f78d1"> "string"</span></div>
<div class="t code" style="left:928.00px;top:807.19px;font-size:16px;color:#9a9a9a;font-weight:400;letter-spacing:-0.45px;">24</div>
<div class="t code" style="left:962.00px;top:807.19px;font-size:16px;color:#1b1b1b;font-weight:400;letter-spacing:-0.45px;white-space:pre;"><span style="color:#3c3c3c">    </span><span style="color:#a8a8a8">–</span><span style="color:#3c3c3c"> column</span><span style="color:#a8a8a8">:</span><span style="color:#2f78d1"> "ip_address"</span></div>
<div class="t code" style="left:928.00px;top:827.44px;font-size:16px;color:#9a9a9a;font-weight:400;letter-spacing:-0.45px;">25</div>
<div class="t code" style="left:962.00px;top:827.44px;font-size:16px;color:#1b1b1b;font-weight:400;letter-spacing:-0.45px;white-space:pre;"><span style="color:#3c3c3c">      type</span><span style="color:#a8a8a8">:</span><span style="color:#2f78d1"> "string"</span></div>
<div class="t code" style="left:928.00px;top:847.69px;font-size:16px;color:#9a9a9a;font-weight:400;letter-spacing:-0.45px;">26</div>
<div class="t code" style="left:962.00px;top:847.69px;font-size:16px;color:#1b1b1b;font-weight:400;letter-spacing:-0.45px;white-space:pre;"><span style="color:#3c3c3c">      entitiesOnly</span><span style="color:#a8a8a8">:</span><span style="color:#2f78d1"> yes</span></div>
<div class="t code" style="left:928.00px;top:867.94px;font-size:16px;color:#9a9a9a;font-weight:400;letter-spacing:-0.45px;">27</div>
<div class="t code" style="left:962.00px;top:867.94px;font-size:16px;color:#1b1b1b;font-weight:400;letter-spacing:-0.45px;white-space:pre;"></div>
<div class="t code" style="left:928.00px;top:888.19px;font-size:16px;color:#9a9a9a;font-weight:400;letter-spacing:-0.45px;">28</div>
<div class="t code" style="left:962.00px;top:888.19px;font-size:16px;color:#1b1b1b;font-weight:400;letter-spacing:-0.45px;white-space:pre;"><span style="color:#3c3c3c">  metrics</span><span style="color:#a8a8a8">:</span></div>
<div class="t code" style="left:928.00px;top:908.44px;font-size:16px;color:#9a9a9a;font-weight:400;letter-spacing:-0.45px;">29</div>
<div class="t code" style="left:962.00px;top:908.44px;font-size:16px;color:#1b1b1b;font-weight:400;letter-spacing:-0.45px;white-space:pre;"><span style="color:#3c3c3c">    </span><span style="color:#a8a8a8">–</span><span style="color:#3c3c3c"> identifier</span><span style="color:#a8a8a8">:</span><span style="color:#2f78d1"> "registrations"</span></div>
</body></html>
